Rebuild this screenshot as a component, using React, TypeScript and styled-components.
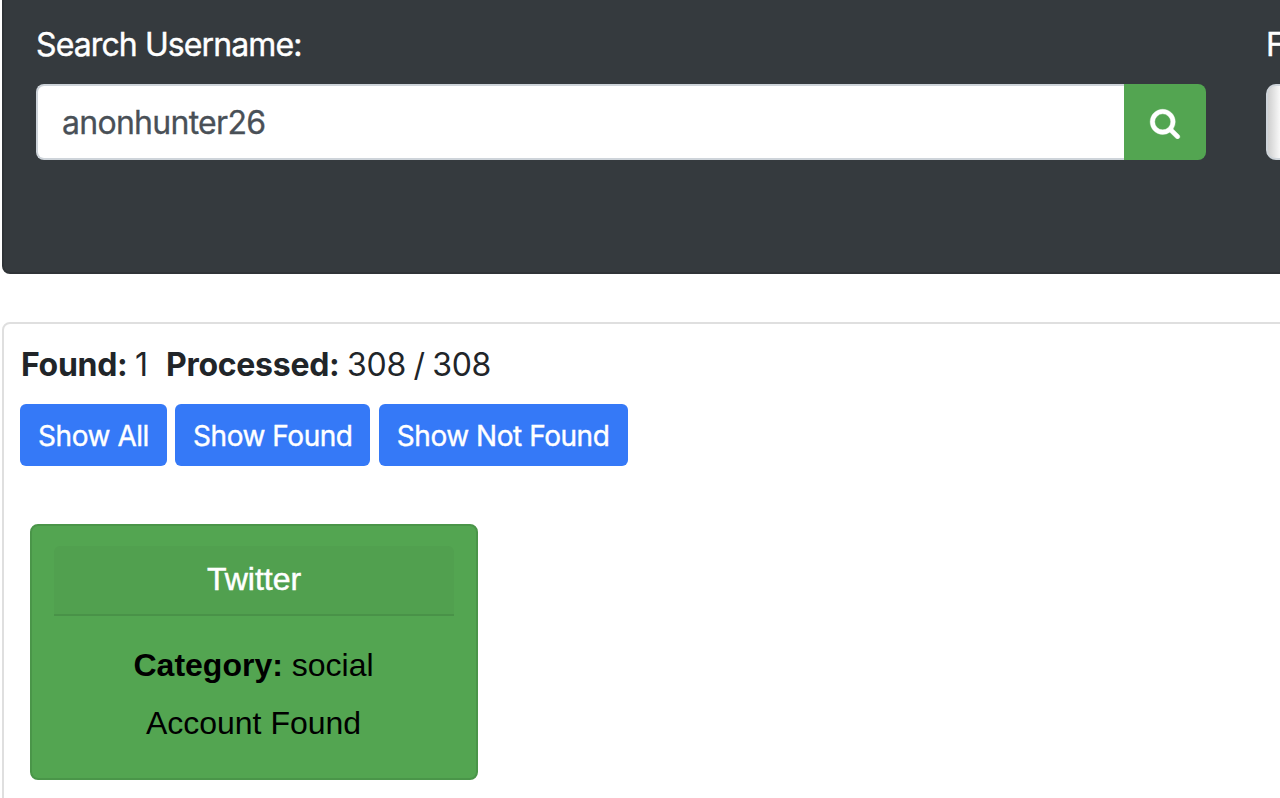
import React from "react";
import styled, { createGlobalStyle } from "styled-components";

const GlobalStyle = createGlobalStyle`
  *, *::before, *::after { box-sizing: border-box; }
  body { margin: 0; background: #fff; color: #212529; font-family: Inter, "Liberation Sans", sans-serif; font-size: 32px; line-height: 48px; overflow: hidden; }
`;

const Page = styled.div`
  width: 1280px;
  height: 798px;
  padding-left: 2px;
  overflow: hidden;
`;

const SearchPanel = styled.section`
  display: flex;
  gap: 60px;
  width: 1400px;
  height: 274px;
  padding: 20px 32px 0;
  border: 2px solid #2f3337;
  border-top: 0;
  border-radius: 0 0 8px 8px;
  background: #353a3e;
  color: #fff;
`;

const Field = styled.div<{ $width: number }>`
  flex: 0 0 ${(p) => p.$width}px;
`;

const Label = styled.label`
  display: block;
  height: 64px;
  padding-top: 1px;
  letter-spacing: -0.9px;
  -webkit-text-stroke: 0.4px #fff;
  white-space: nowrap;
`;

const InputGroup = styled.div`
  display: flex;
  height: 76px;
`;

const Input = styled.input`
  flex: 1;
  min-width: 0;
  padding: 2px 24px 0;
  border: 2px solid #ced4da;
  border-right: 0;
  border-radius: 8px 0 0 8px;
  outline: 0;
  background: #fff;
  color: #495057;
  font: 400 32px/48px Inter, "Liberation Sans", sans-serif;
  letter-spacing: -0.72px;
  -webkit-text-stroke: 0.3px #495057;
`;

const SearchButton = styled.button`
  display: flex;
  align-items: center;
  justify-content: center;
  width: 82px;
  padding: 0;
  border: 0;
  border-radius: 0 8px 8px 0;
  background: #53a551;
  color: #fff;
`;

const SearchGlyph = styled.svg`
  width: 32px;
  height: 32px;
  margin-top: 1px;
  fill: currentColor;
  stroke: currentColor;
  stroke-width: 20px;
`;

const Select = styled.div`
  height: 76px;
  border: 2px solid #ced4da;
  border-radius: 10px;
  background: linear-gradient(90deg, #cfcfcf, #fff 14px);
`;

const Results = styled.main`
  width: 1400px;
  height: 600px;
  margin-top: 48px;
  padding: 16px;
  border: 2px solid #dfdfdf;
  border-radius: 8px;
`;

const Summary = styled.div`
  display: flex;
  height: 64px;
  padding: 1px 0 0 1px;
  white-space: pre;
`;

const Stat = styled.span<{ $width?: number }>`
  width: ${(p) => (p.$width ? `${p.$width}px` : "auto")};
  letter-spacing: -0.28px;
  word-spacing: -1.2px;
`;

const ButtonRow = styled.div`
  display: flex;
  gap: 8.4px;
`;

const FilterButton = styled.button<{ $width: number }>`
  width: ${(p) => p.$width}px;
  height: 62px;
  padding: 2px 0 0;
  border: 0;
  border-radius: 6px;
  background: #3579f7;
  color: #fff;
  font: 400 28px/42px Inter, "Liberation Sans", sans-serif;
  letter-spacing: -0.46px;
  -webkit-text-stroke: 0.4px #fff;
  white-space: nowrap;
`;

const Card = styled.article`
  width: 448px;
  height: 256px;
  margin: 58px 0 0 10px;
  padding: 20px 22px;
  border: 2px solid #4a9549;
  border-radius: 8px;
  background: #53a551;
  color: #000;
  font-family: "Liberation Sans", Arial, sans-serif;
  text-align: center;
`;

const CardHeader = styled.header`
  height: 70px;
  padding-top: 9px;
  border-bottom: 2px solid #499248;
  border-radius: 6px 6px 0 0;
  background: #51a04f;
  color: #fff;
  -webkit-text-stroke: 0.5px #fff;
`;

const CardBody = styled.div`
  padding: 25px 1px 0 0;
`;

const CardLine = styled.p`
  margin: 0 0 10px;
`;

export default function App() {
  return (
    <>
      <GlobalStyle />
      <Page>
        <SearchPanel>
          <Field $width={1170}>
            <Label htmlFor="username">Search Username:</Label>
            <InputGroup>
              <Input id="username" defaultValue="anonhunter26" />
              <SearchButton aria-label="Search">
                <SearchGlyph viewBox="0 0 1792 1792">
                  <path d="M1216 832q0-185-131.5-316.5T768 384 451.5 515.5 320 832t131.5 316.5T768 1280t316.5-131.5T1216 832zm512 832q0 52-38 90t-90 38q-54 0-90-38l-343-342q-179 124-399 124-143 0-273.5-55.5t-225-150-150-225T64 832t55.5-273.5 150-225 225-150T768 128t273.5 55.5 225 150 150 225T1472 832q0 220-124 399l343 343q37 37 37 90z" />
                </SearchGlyph>
              </SearchButton>
            </InputGroup>
          </Field>
          <Field $width={400}>
            <Label>Filter:</Label>
            <Select />
          </Field>
        </SearchPanel>
        <Results>
          <Summary>
            <Stat $width={145}><b>Found:</b> 1</Stat>
            <Stat><b>Processed:</b> 308 / 308</Stat>
          </Summary>
          <ButtonRow>
            <FilterButton $width={147}>Show All</FilterButton>
            <FilterButton $width={194.8}>Show Found</FilterButton>
            <FilterButton $width={249}>Show Not Found</FilterButton>
          </ButtonRow>
          <Card>
            <CardHeader>Twitter</CardHeader>
            <CardBody>
              <CardLine><b>Category:</b> social</CardLine>
              <CardLine>Account Found</CardLine>
            </CardBody>
          </Card>
        </Results>
      </Page>
    </>
  );
}
